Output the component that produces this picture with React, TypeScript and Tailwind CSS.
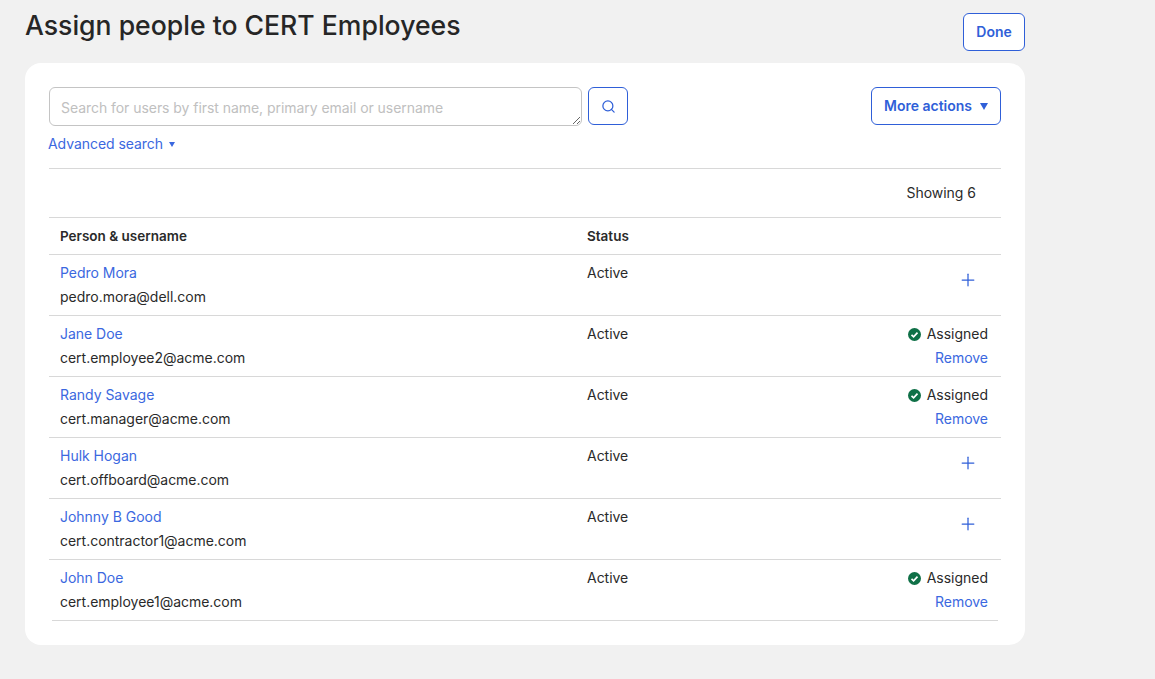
import { Plus, Search } from "lucide-react";

type Person = {
  name: string;
  email: string;
  assigned: boolean;
};

const people: Person[] = [
  { name: "Pedro Mora", email: "pedro.mora@dell.com", assigned: false },
  { name: "Jane Doe", email: "cert.employee2@acme.com", assigned: true },
  { name: "Randy Savage", email: "cert.manager@acme.com", assigned: true },
  { name: "Hulk Hogan", email: "cert.offboard@acme.com", assigned: false },
  { name: "Johnny B Good", email: "cert.contractor1@acme.com", assigned: false },
  { name: "John Doe", email: "cert.employee1@acme.com", assigned: true },
];

function CheckBadge() {
  return (
    <svg width="13" height="13" viewBox="0 0 13 13" className="shrink-0">
      <circle cx="6.5" cy="6.5" r="6.5" fill="#0f7047" />
      <path d="M3.5 6.8 5.6 8.8 9.5 4.6" fill="none" stroke="#fff" strokeWidth="1.7" />
    </svg>
  );
}

function PersonRow({ person, last }: { person: Person; last: boolean }) {
  return (
    <div className={last ? "mx-[3px] border-b border-[#d8d8d8]" : "border-b border-[#d8d8d8]"}>
      <div className={last ? "flex h-[60px] pl-2 pr-[10px] pt-[6px]" : "flex h-[60px] pl-[11px] pr-[13px] pt-[6px]"}>
        <div className="w-[527px] leading-6">
          <a className="block text-[#3b68e0]">{person.name}</a>
          <div className="text-[#2a2a2a]">{person.email}</div>
        </div>
        <div className="flex-1 leading-6 text-[#2a2a2a]">Active</div>
        {person.assigned ? (
          <div className="flex flex-col items-end leading-6">
            <div className="flex items-center gap-[6px] text-[#2a2a2a]">
              <CheckBadge />
              Assigned
            </div>
            <a className="text-[#3b68e0]">Remove</a>
          </div>
        ) : (
          <div className="pr-[10px] pt-[9px]">
            <Plus size={20} strokeWidth={1.5} color="#2f5fd8" />
          </div>
        )}
      </div>
    </div>
  );
}

export default function App() {
  return (
    <div className="min-h-[679px] bg-[#f1f1f1] pl-[25px] font-['Inter',sans-serif] text-sm tracking-[-0.02px]">
      <div className="w-[1000px]">
        <header className="flex h-[63px] items-start justify-between">
          <h1 className="text-[26.6px] leading-[51px] font-medium tracking-normal text-[#262626]">
            Assign people to CERT Employees
          </h1>
          <button className="mt-[13px] h-[38px] w-[62px] rounded-md border border-[#2f5fd8] bg-white font-semibold text-[#2f5fd8]">
            Done
          </button>
        </header>

        <section className="h-[582px] rounded-2xl bg-white px-6 pt-6">
          <div className="flex items-start justify-between">
            <div className="flex gap-[6px]">
              <textarea
                placeholder="Search for users by first name, primary email or username"
                className="h-[39px] w-[533px] rounded-md border border-[#c4c4c4] pl-[11px] pt-[11px] leading-[18px] tracking-[-0.05px] placeholder:text-[#c0c0c0] focus:outline-none"
              />
              <button className="flex h-[38px] w-10 items-center justify-center rounded-md border border-[#2f5fd8] text-[#2f5fd8]">
                <Search size={15} strokeWidth={2} />
              </button>
            </div>
            <button className="flex h-[38px] w-[130px] items-center justify-center gap-[8px] rounded-md border border-[#2f5fd8] font-semibold text-[#2f5fd8]">
              More actions
              <span className="mt-px h-0 w-0 border-x-[4px] border-t-[7px] border-x-transparent border-t-[#2f5fd8]" />
            </button>
          </div>

          <a className="-ml-px mt-[6px] flex h-6 items-center gap-[6px] tracking-[-0.05px] text-[#3b68e0]">
            Advanced search
            <span className="h-0 w-0 border-x-[3px] border-t-[5px] border-x-transparent border-t-[#3b68e0]" />
          </a>

          <div className="mt-3 flex h-[50px] items-center justify-end border-y border-[#d8d8d8] pr-[25px] text-[#2a2a2a]">
            Showing 6
          </div>

          <div className="flex h-[37px] items-center border-b border-[#d8d8d8] pl-[11px] pt-[2px] text-[13.5px] font-semibold tracking-normal text-[#2a2a2a]">
            <div className="w-[527px]">Person &amp; username</div>
            <div>Status</div>
          </div>

          {people.map((person, i) => (
            <PersonRow key={person.email} person={person} last={i === people.length - 1} />
          ))}
        </section>
      </div>
    </div>
  );
}
